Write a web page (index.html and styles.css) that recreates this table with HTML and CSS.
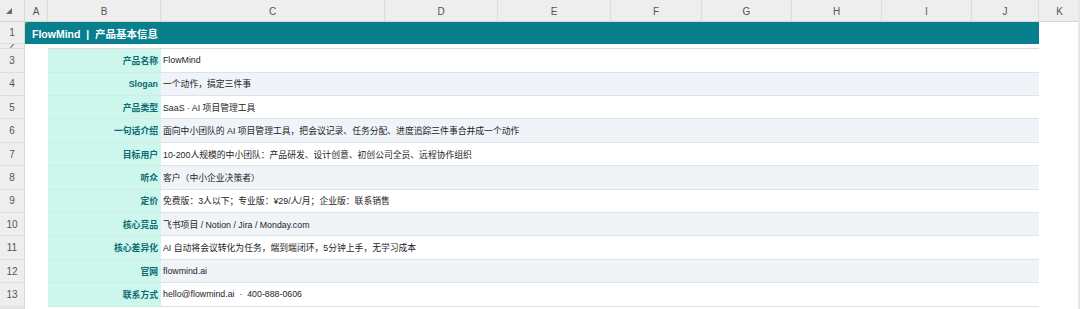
FILE: index.html
```html
<!DOCTYPE html>
<html lang="zh-CN">
<head>
<meta charset="utf-8">
<title>FlowMind 产品基本信息</title>
<link rel="stylesheet" href="styles.css">
</head>
<body>
<div class="sheet">
  <div class="colhead">
    <div class="corner"><svg width="8" height="8" viewBox="0 0 8 8"><polygon points="7,1 7,7 1,7" fill="#6b6b6b"/></svg></div>
    <div class="ch w-a">A</div>
    <div class="ch w-b">B</div>
    <div class="ch w-c">C</div>
    <div class="ch w-d">D</div>
    <div class="ch w-e">E</div>
    <div class="ch w-f">F</div>
    <div class="ch w-g">G</div>
    <div class="ch w-h">H</div>
    <div class="ch w-i">I</div>
    <div class="ch w-j">J</div>
    <div class="ch w-k">K</div>
  </div>

  <div class="row r-title">
    <div class="rn">1</div>
    <div class="title"><span class="mark"></span>FlowMind&nbsp;&nbsp;|&nbsp;&nbsp;产品基本信息</div>
    <div class="kcell"></div>
  </div>

  <div class="row r-gap">
    <div class="rn"><span class="rn-clip">2</span></div>
    <div class="acell"></div>
    <div class="gapline"></div>
    <div class="kcell"></div>
  </div>

  <div class="row data odd">
    <div class="rn">3</div><div class="acell"></div>
    <div class="lab">产品名称</div><div class="val">FlowMind</div><div class="kcell"></div>
  </div>
  <div class="row data even">
    <div class="rn">4</div><div class="acell"></div>
    <div class="lab">Slogan</div><div class="val">一个动作，搞定三件事</div><div class="kcell"></div>
  </div>
  <div class="row data odd">
    <div class="rn">5</div><div class="acell"></div>
    <div class="lab">产品类型</div><div class="val">SaaS · AI 项目管理工具</div><div class="kcell"></div>
  </div>
  <div class="row data even">
    <div class="rn">6</div><div class="acell"></div>
    <div class="lab">一句话介绍</div><div class="val">面向中小团队的 AI 项目管理工具，把会议记录、任务分配、进度追踪三件事合并成一个动作</div><div class="kcell"></div>
  </div>
  <div class="row data odd">
    <div class="rn">7</div><div class="acell"></div>
    <div class="lab">目标用户</div><div class="val">10-200人规模的中小团队：产品研发、设计创意、初创公司全员、远程协作组织</div><div class="kcell"></div>
  </div>
  <div class="row data even">
    <div class="rn">8</div><div class="acell"></div>
    <div class="lab">听众</div><div class="val">客户（中小企业决策者）</div><div class="kcell"></div>
  </div>
  <div class="row data odd">
    <div class="rn">9</div><div class="acell"></div>
    <div class="lab">定价</div><div class="val">免费版：3人以下；专业版：¥29/人/月；企业版：联系销售</div><div class="kcell"></div>
  </div>
  <div class="row data even">
    <div class="rn">10</div><div class="acell"></div>
    <div class="lab">核心竞品</div><div class="val">飞书项目 / Notion / Jira / Monday.com</div><div class="kcell"></div>
  </div>
  <div class="row data odd">
    <div class="rn">11</div><div class="acell"></div>
    <div class="lab">核心差异化</div><div class="val">AI 自动将会议转化为任务，端到端闭环，5分钟上手，无学习成本</div><div class="kcell"></div>
  </div>
  <div class="row data even">
    <div class="rn">12</div><div class="acell"></div>
    <div class="lab">官网</div><div class="val">flowmind.ai</div><div class="kcell"></div>
  </div>
  <div class="row data odd">
    <div class="rn">13</div><div class="acell"></div>
    <div class="lab">联系方式</div><div class="val">hello@flowmind.ai &nbsp;·&nbsp; 400-888-0606</div><div class="kcell"></div>
  </div>
  <div class="row r-tail">
    <div class="rn"></div>
    <div class="acell"></div>
  </div>
</div>
</body>
</html>
```

FILE: styles.css
```css
* { box-sizing: border-box; }

html, body {
  margin: 0;
  padding: 0;
  background: #ffffff;
  overflow: hidden;
}

body {
  font-family: "Liberation Sans", "Noto Sans CJK SC", sans-serif;
  color: #222222;
}

.sheet {
  width: 1080px;
  height: 309px;
  overflow: hidden;
  display: flex;
  flex-direction: column;
  position: relative;
  border-right: 2px solid #e6e6e6;
}

/* column header */
.colhead {
  display: flex;
  height: 22px;
  flex: 0 0 22px;
  background: #eeeeee;
  border-bottom: 1px solid #d6d6d6;
}

.corner {
  width: 25px;
  flex: 0 0 25px;
  display: flex;
  align-items: center;
  padding-left: 5px;
  padding-top: 1px;
  border-right: 1px solid #d9d9d9;
}

.ch {
  display: flex;
  align-items: center;
  justify-content: center;
  font-size: 10px;
  color: #555555;
  border-right: 1px solid #dcdcdc;
  padding-top: 1px;
}

.w-a { width: 23px; flex: 0 0 23px; }
.w-b { width: 113px; flex: 0 0 113px; }
.w-c { width: 224px; flex: 0 0 224px; }
.w-d { width: 113px; flex: 0 0 113px; }
.w-e { width: 113px; flex: 0 0 113px; }
.w-f { width: 91px; flex: 0 0 91px; }
.w-g { width: 90px; flex: 0 0 90px; }
.w-h { width: 90px; flex: 0 0 90px; }
.w-i { width: 90px; flex: 0 0 90px; }
.w-j { width: 67px; flex: 0 0 67px; }
.w-k { width: 41px; flex: 0 0 41px; border-right: none; }

/* rows */
.row {
  display: flex;
}

.rn {
  width: 25px;
  flex: 0 0 25px;
  background: #eeeeee;
  border-right: 1px solid #d9d9d9;
  border-bottom: 1px solid #dddddd;
  display: flex;
  align-items: center;
  justify-content: center;
  font-size: 10px;
  color: #555555;
  overflow: hidden;
}

.acell {
  width: 23px;
  flex: 0 0 23px;
}

.kcell {
  flex: 1 1 auto;
}

/* title row */
.r-title {
  height: 22px;
  flex: 0 0 22px;
}

.title {
  width: 1014px;
  flex: 0 0 1014px;
  background: #077f8c;
  color: #ffffff;
  font-weight: bold;
  font-size: 10.5px;
  display: flex;
  align-items: center;
  padding-left: 7px;
  position: relative;
}

.mark {
  position: absolute;
  left: 0;
  top: 0;
  width: 0;
  height: 0;
  border-top: 3px solid #2fb24a;
  border-right: 3px solid transparent;
}

/* gap row */
.r-gap {
  height: 5.3px;
  flex: 0 0 5.3px;
}

.r-gap .rn {
  align-items: flex-start;
}

.rn-clip {
  display: block;
  line-height: 10px;
  margin-top: -3px;
}

.gapline {
  width: 991px;
  flex: 0 0 991px;
  border-bottom: 1px solid #dcdde2;
}

/* data rows */
.data {
  height: 23.4px;
  flex: 0 0 23.4px;
}

.lab {
  width: 113px;
  flex: 0 0 113px;
  background: #cdf6ec;
  color: #0e6b74;
  font-weight: bold;
  font-size: 8.8px;
  text-align: right;
  display: flex;
  align-items: center;
  justify-content: flex-end;
  padding-right: 3px;
  border-bottom: 1px solid #d5e8e4;
  white-space: nowrap;
}

.val {
  width: 878px;
  flex: 0 0 878px;
  font-size: 8.8px;
  color: #1e1e1e;
  display: flex;
  align-items: center;
  padding-left: 2px;
  border-bottom: 1px solid #dde3ea;
  white-space: nowrap;
}

.odd .val { background: #ffffff; }
.even .val { background: #f0f3f8; }

.r-tail {
  flex: 1 1 auto;
}
```
